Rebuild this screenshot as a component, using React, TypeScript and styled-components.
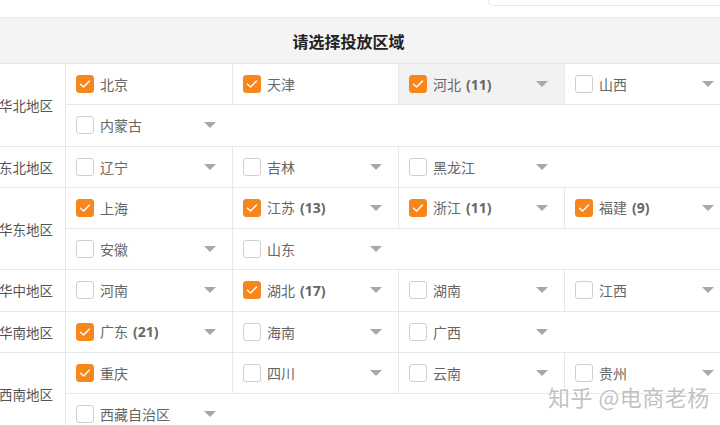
import React from "react";
import styled, { createGlobalStyle } from "styled-components";

const Global = createGlobalStyle`
  html, body { margin: 0; padding: 0; background: #fff; }
  body { overflow: hidden; width: 720px; height: 425px; font-family: "Noto Sans CJK SC", "Noto Sans", sans-serif; }
`;

const Page = styled.div`
  position: relative;
  width: 720px;
  height: 425px;
  overflow: hidden;
`;

const TopBar = styled.div`
  height: 17px;
  display: flex;
  justify-content: flex-end;
  border-bottom: 1px solid #ececec;
`;

const SearchBox = styled.div`
  width: 231px;
  height: 5px;
  border: 1px solid #e6e6e6;
  border-top: none;
  border-right: none;
  border-radius: 0 0 0 5px;
`;

const Table = styled.div`
  width: 731px;
`;

const Header = styled.div`
  height: 46px;
  background: #f4f4f4;
  border-bottom: 1px solid #e6e6e6;
  display: flex;
  align-items: center;
  justify-content: center;
  padding-right: 34px;
  box-sizing: border-box;
  font-size: 16px;
  font-weight: 700;
  color: #222;
`;

const Region = styled.div`
  display: flex;
  border-bottom: 1px solid #e8e8e8;
`;

const Label = styled.div`
  width: 66px;
  flex: none;
  display: flex;
  align-items: center;
  justify-content: flex-end;
  padding-right: 12px;
  box-sizing: border-box;
  border-right: 1px solid #e8e8e8;
  font-size: 13.5px;
  color: #555;
  white-space: nowrap;
  overflow: hidden;
`;

const Rows = styled.div`
  display: flex;
  flex-direction: column;
  flex: 1;
`;

const SubRow = styled.div`
  display: flex;
  height: 40.25px;
  & + & { border-top: 1px solid #e8e8e8; }
`;

const Cell = styled.div<{ $hl?: boolean }>`
  width: 166px;
  flex: none;
  box-sizing: border-box;
  display: flex;
  align-items: center;
  padding: 0 16px 0 10px;
  background: ${(p) => (p.$hl ? "#f2f2f2" : "#fff")};
  & + & { border-left: 1px solid #e8e8e8; }
`;

const Box = styled.span<{ $on?: boolean }>`
  width: 18px;
  height: 18px;
  flex: none;
  box-sizing: border-box;
  border-radius: 3px;
  display: flex;
  align-items: center;
  justify-content: center;
  background: ${(p) => (p.$on ? "#f7861c" : "#fff")};
  border: 1px solid ${(p) => (p.$on ? "#f7861c" : "#cfcfcf")};
`;

const Name = styled.span`
  margin-left: 6px;
  font-size: 14px;
  line-height: 18px;
  color: #666;
  white-space: nowrap;
  flex: 1;
`;

const Count = styled.b`
  font-weight: 700;
  margin-left: 5px;
  font-family: "Noto Sans", "Open Sans", sans-serif;
  font-size: 14px;
  color: #666;
`;

const Arrow = styled.span`
  width: 0;
  height: 0;
  flex: none;
  border-left: 6px solid transparent;
  border-right: 6px solid transparent;
  border-top: 6px solid #a8a8a8;
`;

const Watermark = styled.div`
  position: absolute;
  left: 548px;
  top: 385px;
  font-size: 22px;
  line-height: 22px;
  color: rgba(140, 140, 140, 0.55);
  text-shadow: 0 0 2px #fff, 0 0 1px #fff;
  white-space: nowrap;
  letter-spacing: 0.5px;
`;

type Item = { n: string; c?: boolean; count?: number; arrow?: boolean; hl?: boolean };
type RegionData = { name: string; items: Item[] };

const data: RegionData[] = [
  {
    name: "华北地区",
    items: [
      { n: "北京", c: true },
      { n: "天津", c: true },
      { n: "河北", c: true, count: 11, arrow: true, hl: true },
      { n: "山西", arrow: true },
      { n: "内蒙古", arrow: true },
    ],
  },
  {
    name: "东北地区",
    items: [
      { n: "辽宁", arrow: true },
      { n: "吉林", arrow: true },
      { n: "黑龙江", arrow: true },
    ],
  },
  {
    name: "华东地区",
    items: [
      { n: "上海", c: true },
      { n: "江苏", c: true, count: 13, arrow: true },
      { n: "浙江", c: true, count: 11, arrow: true },
      { n: "福建", c: true, count: 9, arrow: true },
      { n: "安徽", arrow: true },
      { n: "山东", arrow: true },
    ],
  },
  {
    name: "华中地区",
    items: [
      { n: "河南", arrow: true },
      { n: "湖北", c: true, count: 17, arrow: true },
      { n: "湖南", arrow: true },
      { n: "江西", arrow: true },
    ],
  },
  {
    name: "华南地区",
    items: [
      { n: "广东", c: true, count: 21, arrow: true },
      { n: "海南", arrow: true },
      { n: "广西", arrow: true },
    ],
  },
  {
    name: "西南地区",
    items: [
      { n: "重庆", c: true },
      { n: "四川", arrow: true },
      { n: "云南", arrow: true },
      { n: "贵州", arrow: true },
      { n: "西藏自治区", arrow: true },
    ],
  },
];

const Check = () => (
  <svg width="12" height="10" viewBox="0 0 12 10">
    <path d="M1.5 5.2 L4.6 8 L10.5 2" fill="none" stroke="#fff" strokeWidth="1.4" strokeLinecap="round" strokeLinejoin="round" />
  </svg>
);

function chunk<T>(arr: T[], n: number): T[][] {
  const out: T[][] = [];
  for (let i = 0; i < arr.length; i += n) out.push(arr.slice(i, i + n));
  return out;
}

export default function App() {
  return (
    <Page>
      <Global />
      <TopBar>
        <SearchBox />
      </TopBar>
      <Table>
        <Header>请选择投放区域</Header>
        {data.map((r) => (
          <Region key={r.name}>
            <Label>{r.name}</Label>
            <Rows>
              {chunk(r.items, 4).map((row, i) => (
                <SubRow key={i}>
                  {row.map((it) => (
                    <Cell key={it.n} $hl={it.hl}>
                      <Box $on={it.c}>{it.c && <Check />}</Box>
                      <Name>
                        {it.n}
                        {it.count !== undefined && <Count>({it.count})</Count>}
                      </Name>
                      {it.arrow && <Arrow />}
                    </Cell>
                  ))}
                </SubRow>
              ))}
            </Rows>
          </Region>
        ))}
      </Table>
      <Watermark>知乎 @电商老杨</Watermark>
    </Page>
  );
}
